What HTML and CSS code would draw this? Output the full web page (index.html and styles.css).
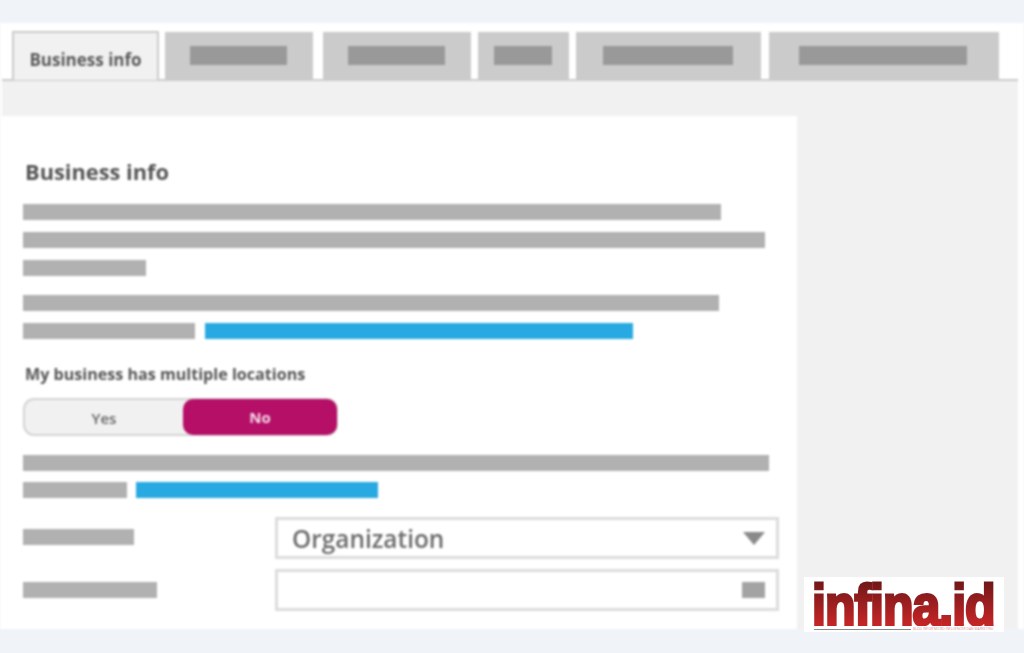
FILE: index.html
```html
<!DOCTYPE html>
<html lang="en">
<head>
<meta charset="utf-8">
<title>Business info</title>
<link rel="stylesheet" href="styles.css">
</head>
<body>
<main class="frame">
  <nav class="tabs">
    <div class="tab tab-active">Business info</div>
    <div class="tab t1"><span class="tab-bar"></span></div>
    <div class="tab t2"><span class="tab-bar"></span></div>
    <div class="tab t3"><span class="tab-bar"></span></div>
    <div class="tab t4"><span class="tab-bar"></span></div>
    <div class="tab t5"><span class="tab-bar"></span></div>
  </nav>
  <section class="panel">
    <div class="card">
      <h1 class="title">Business info</h1>
      <div class="bar b1"></div>
      <div class="bar b2"></div>
      <div class="bar b3"></div>
      <div class="bar b4"></div>
      <div class="line l1"><div class="bar b5"></div><div class="link k1"></div></div>
      <p class="label">My business has multiple locations</p>
      <div class="toggle"><span class="opt-yes">Yes</span><span class="opt-no">No</span></div>
      <div class="bar b6"></div>
      <div class="line l2"><div class="bar b7"></div><div class="link k2"></div></div>
      <div class="form-row r1">
        <div class="bar b8"></div>
        <div class="field">
          <span class="field-text">Organization</span>
          <svg class="caret" width="22" height="13" viewBox="0 0 22 13"><path d="M0 0H22L11 13Z" fill="#8a8a8a"/></svg>
        </div>
      </div>
      <div class="form-row r2">
        <div class="bar b9"></div>
        <div class="field"><span class="field-icon"></span></div>
      </div>
    </div>
  </section>
</main>
<footer class="bottom"></footer>
<div class="logo">
  <span class="logo-name">infina.id</span>
  <div class="logo-sub"><span class="logo-rule"></span><span class="logo-tag">BLOG INFOR MICRO INFLUENCER DAN MARKETING</span></div>
</div>
</body>
</html>
```
FILE: styles.css
```css
* { box-sizing: border-box; }
html, body { margin: 0; height: 653px; overflow: hidden; }
body { position: relative; background: #f0f4f8; padding-top: 23px; font-family: "Open Sans", "Noto Sans", sans-serif; color: #5c5c5c; }
.frame { height: 606px; background: #fff; padding-top: 8px; filter: blur(0.8px); }
.tabs { display: flex; align-items: flex-start; height: 48px; padding-left: 12px; }
.tab { height: 47px; margin-top: 1px; background: #cbcbcb; display: flex; justify-content: center; padding: 14px 2px 0 0; flex: none; }
.tab-bar { display: block; height: 19px; background: #999; }
.tab-active { width: 147px; height: 49px; margin-top: 0; padding: 15px 0 0; position: relative; z-index: 1; background: #f1f1f1; border: 2px solid #cbcbcb; border-bottom: 0; font-size: 17px; font-weight: 700; line-height: 24px; color: #5a5a5a; }
.t1 { width: 148px; margin-left: 6px; } .t1 .tab-bar { width: 97px; }
.t2 { width: 148px; margin-left: 10px; } .t2 .tab-bar { width: 97px; }
.t3 { width: 91px; margin-left: 7px; } .t3 .tab-bar { width: 58px; }
.t4 { width: 185px; margin-left: 7px; } .t4 .tab-bar { width: 130px; }
.t5 { width: 230px; margin-left: 8px; } .t5 .tab-bar { width: 168px; }
.panel { width: 1016px; height: 550px; margin-left: 2px; background: #f1f1f1; border-top: 2px solid #cbcbcb; padding-top: 35px; }
.card { width: 795px; height: 513px; background: #fff; padding: 41px 0 0 21px; }
.title { margin: 0; font-size: 21.8px; line-height: 30px; font-weight: 700; padding-left: 2px; color: #555; }
.bar { height: 16px; background: #b1b1b1; flex: none; }
.link { height: 16px; background: #29a9e1; flex: none; }
.b1 { width: 698px; margin-top: 17px; }
.b2 { width: 742px; margin-top: 12px; }
.b3 { width: 123px; margin-top: 12px; }
.b4 { width: 696px; margin-top: 19px; }
.line { display: flex; }
.l1 { margin-top: 12px; gap: 10px; }
.b5 { width: 172px; }
.k1 { width: 428px; }
.label { margin: 24px 0 0; padding-left: 2px; font-size: 16.1px; line-height: 22px; font-weight: 700; color: #555; }
.toggle { width: 315px; height: 38px; margin-top: 13px; border: 2px solid #d4d4d4; border-radius: 11px; background: #f1f1f1; display: flex; font-size: 15px; font-weight: 600; }
.opt-yes { width: 158px; display: flex; align-items: center; justify-content: center; padding-top: 1px; color: #666; }
.opt-no { flex: 1; margin: -1px -1px 0 0; height: 36px; background: #b50f67; color: #f3dbe8; border-radius: 10px; display: flex; align-items: center; justify-content: center; font-weight: 700; }
.b6 { width: 746px; margin-top: 19px; }
.l2 { margin-top: 11px; gap: 9px; }
.b7 { width: 104px; }
.k2 { width: 242px; }
.form-row { display: flex; align-items: center; height: 42px; }
.r1 { margin-top: 19px; }
.r2 { margin-top: 10px; }
.b8 { width: 111px; margin-bottom: 3px; }
.b9 { width: 134px; }
.r1 .field { margin-left: 141px; }
.r2 .field { margin-left: 118px; }
.field { width: 504px; height: 42px; border: 3px solid #dcdcdc; display: flex; align-items: center; justify-content: space-between; padding: 0 11px 0 14px; }
.field-text { font-size: 24.4px; line-height: 34px; font-weight: 600; color: #6b6b6b; padding-top: 1px; }
.field-icon { width: 23px; height: 16px; background: #a3a3a3; margin-left: auto; }
.caret { flex: none; }
.bottom { height: 24px; }
.logo { position: absolute; left: 804px; top: 577px; width: 200px; height: 55px; background: #fff; padding: 3px 0 0 8px; }
.logo-name { display: block; height: 46px; font-family: "Liberation Sans", sans-serif; font-weight: 700; font-size: 50px; line-height: 57px; letter-spacing: -1px; white-space: nowrap; background: linear-gradient(#711718 17%, #c22526 95%); -webkit-background-clip: text; background-clip: text; color: transparent; -webkit-text-stroke: 2.6px transparent; transform: scaleY(1.15); transform-origin: bottom; }
.logo-sub { display: flex; align-items: center; gap: 2px; padding-left: 2px; }
.logo-rule { width: 97px; height: 1px; background: #8a8a8a; flex: none; }
.logo-tag { font-size: 3.4px; line-height: 6px; color: #dd8f8f; white-space: nowrap; }
```
